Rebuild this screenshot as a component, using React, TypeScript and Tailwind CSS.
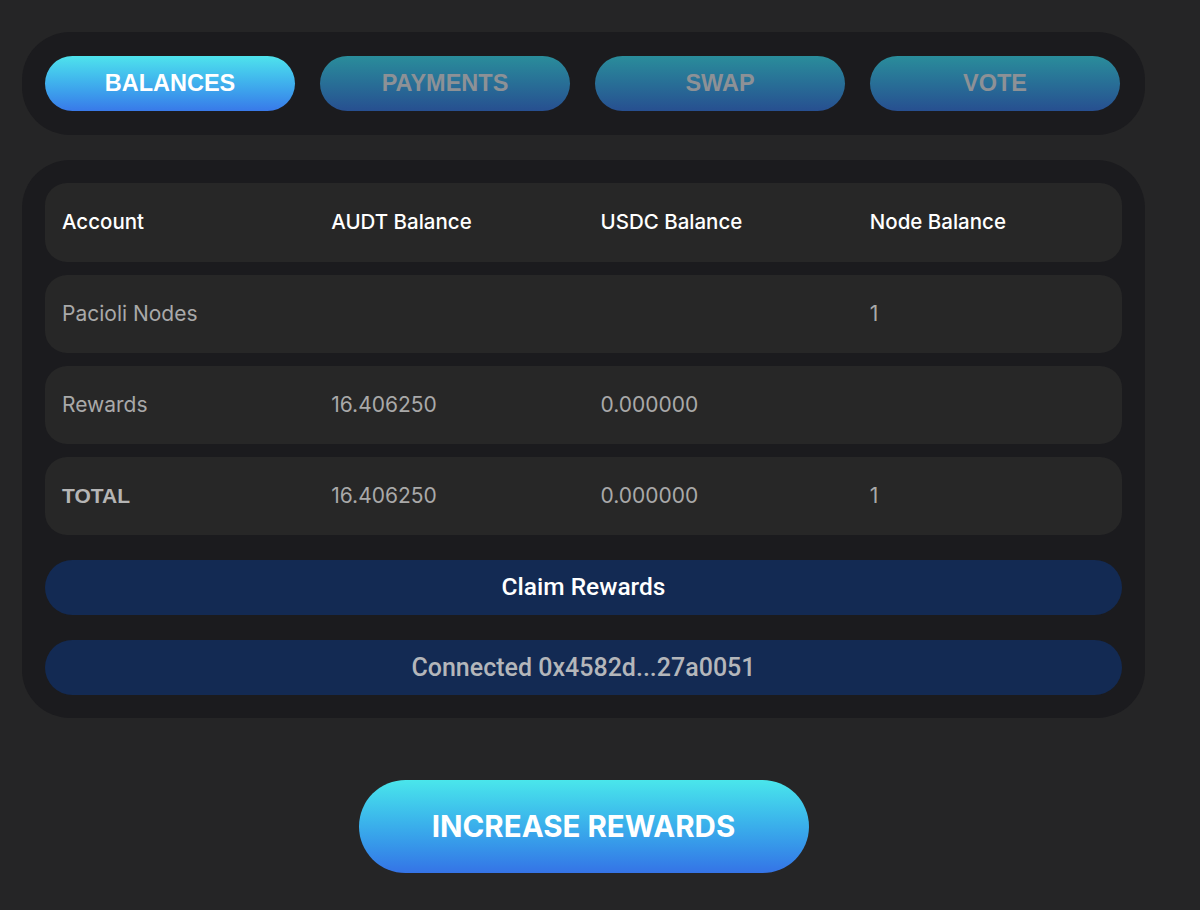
import React from "react";

const tabs = ["BALANCES", "PAYMENTS", "SWAP", "VOTE"];

const rows = [
    { account: "Pacioli Nodes", audt: "", usdc: "", node: "1", bold: false },
    { account: "Rewards", audt: "16.406250", usdc: "0.000000", node: "", bold: false },
    { account: "TOTAL", audt: "16.406250", usdc: "0.000000", node: "1", bold: true },
];

export default function App() {
    return (
        <div className="min-h-[910px] w-full bg-[#252526] pt-[32px] font-['Inter',sans-serif]">
            <div className="mx-[22px] w-[1123px]">
                {/* tabs */}
                <div className="flex gap-[25px] rounded-[48px] bg-[#1b1b1e] px-[23px] py-[24px]">
                    {tabs.map((t, i) => (
                        <button
                            key={t}
                            className={`h-[55px] w-[250px] rounded-full font-['Liberation_Sans',Arial,sans-serif] text-[23.5px] font-bold ${i === 0
                                ? "bg-gradient-to-b from-[#4fe3ec] to-[#3979e9] text-white"
                                : "bg-gradient-to-b from-[#2a8d9b] to-[#274f90] text-[#8d9196]"
                                }`}
                        >
                            {t}
                        </button>
                    ))}
                </div>

                {/* balances */}
                <div className="mt-[25px] flex flex-col rounded-[48px] bg-[#1b1b1e] px-[23px] pt-[23px] pb-[23px]">
                    <div className="grid h-[79px] grid-cols-4 items-center rounded-[22px] bg-[#272727] text-[20.5px] font-[450] text-white">
                        <div className="pl-[17px]">Account</div>
                        <div className="pl-[17px]">AUDT Balance</div>
                        <div className="pl-[17px]">USDC Balance</div>
                        <div className="pl-[17px]">Node Balance</div>
                    </div>
                    {rows.map(r => (
                        <div key={r.account} className="mt-[13px] grid h-[78px] grid-cols-4 items-center rounded-[22px] bg-[#272727] text-[21px] text-[#a9a9a9]">
                            <div className={r.bold ? "pl-[17px] font-['Liberation_Sans',Arial,sans-serif] font-bold text-[#b5b5b5]" : "pl-[17px]"}>{r.account}</div>
                            <div className="pl-[17px]">{r.audt}</div>
                            <div className="pl-[17px]">{r.usdc}</div>
                            <div className="pl-[17px]">{r.node}</div>
                        </div>
                    ))}
                    <button className="mt-[25px] h-[55px] rounded-full bg-[#132a53] font-['Roboto',sans-serif] text-[24.5px] font-medium text-white">
                        Claim Rewards
                    </button>
                    <div className="mt-[25px] flex h-[55px] items-center justify-center rounded-full bg-[#132a53] font-['Roboto',sans-serif] text-[25px] font-medium text-[#b4b6ba]">
                        Connected 0x4582d...27a0051
                    </div>
                </div>

                {/* bottom */}
                <div className="mt-[62px] flex justify-center">
                    <button className="h-[93px] w-[450px] rounded-full bg-gradient-to-b from-[#4ae6eb] to-[#3573e6] font-['Inter',sans-serif] text-[29.5px] font-bold text-white">
                        INCREASE REWARDS
                    </button>
                </div>
            </div>
        </div>
    );
}
